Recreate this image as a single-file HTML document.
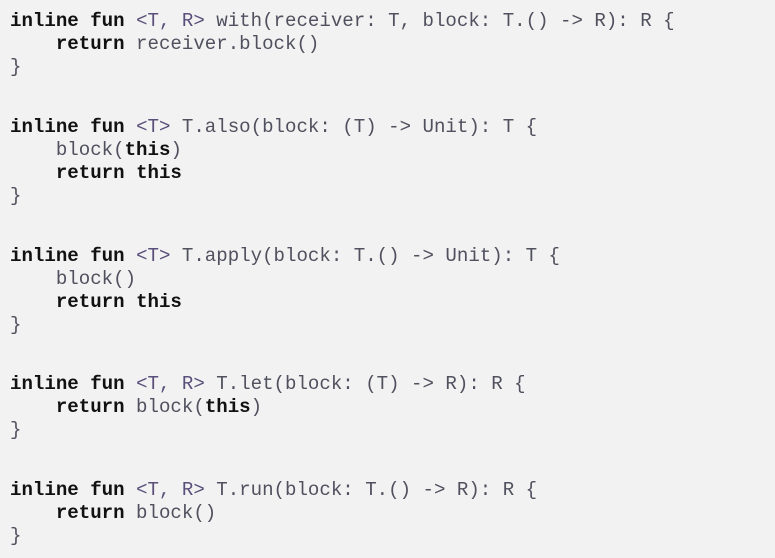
<!DOCTYPE html>
<html><head><meta charset="utf-8"><style>
html,body{margin:0;padding:0;background:#f2f2f2;width:775px;height:558px;overflow:hidden}
pre{margin:0;position:absolute;left:10px;font-family:"Liberation Mono",monospace;font-size:19.1px;line-height:23px;color:#50505e}
b{color:#111;font-weight:bold}
.g{color:#5a4f7a}
</style></head><body>
<pre style="top:10px"><b>inline</b> <b>fun</b> <span class="g">&lt;T, R&gt;</span> with(receiver: T, block: T.() -&gt; R): R {
    <b>return</b> receiver.block()
}</pre>
<pre style="top:116px"><b>inline</b> <b>fun</b> <span class="g">&lt;T&gt;</span> T.also(block: (T) -&gt; Unit): T {
    block(<b>this</b>)
    <b>return</b> <b>this</b>
}</pre>
<pre style="top:245px"><b>inline</b> <b>fun</b> <span class="g">&lt;T&gt;</span> T.apply(block: T.() -&gt; Unit): T {
    block()
    <b>return</b> <b>this</b>
}</pre>
<pre style="top:373px"><b>inline</b> <b>fun</b> <span class="g">&lt;T, R&gt;</span> T.let(block: (T) -&gt; R): R {
    <b>return</b> block(<b>this</b>)
}</pre>
<pre style="top:479px"><b>inline</b> <b>fun</b> <span class="g">&lt;T, R&gt;</span> T.run(block: T.() -&gt; R): R {
    <b>return</b> block()
}</pre>
</body></html>
